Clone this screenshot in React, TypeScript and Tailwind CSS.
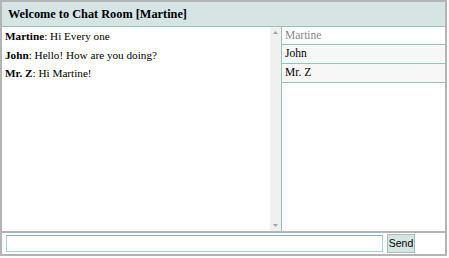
import React from "react";

export default function App() {
  const serif = { fontFamily: '"Liberation Serif", "Times New Roman", serif' };
  return (
    <div className="w-[449px] h-[258px] bg-white" style={serif}>
      <div className="w-[447px] h-[256px] border-2 border-[#b4b4b4] flex flex-col">
        <div className="h-[25px] shrink-0 bg-[#d5e5e4] border-b border-[#93c5b3] flex items-center pl-[6px]">
          <span className="text-[12.3px] font-bold text-black">Welcome to Chat Room [Martine]</span>
        </div>
        <div className="flex-1 flex min-h-0">
          <div className="flex-1 pl-[3px] pt-0 text-[11.2px] text-black leading-[18.5px]">
            <div><b>Martine</b>: Hi Every one</div>
            <div><b>John</b>: Hello! How are you doing?</div>
            <div><b>Mr. Z</b>: Hi Martine!</div>
          </div>
          <div className="w-[11px] shrink-0 bg-[#f0f0f0] flex flex-col justify-between items-center py-[4px]">
            <svg width="5" height="3" viewBox="0 0 5 3"><path d="M2.5 0 L5 3 L0 3 Z" fill="#a3a3a3" /></svg>
            <svg width="5" height="3" viewBox="0 0 5 3"><path d="M0 0 L5 0 L2.5 3 Z" fill="#a3a3a3" /></svg>
          </div>
          <div className="w-[164px] shrink-0 border-l border-[#93c5b3] flex flex-col text-[11.5px]">
            <div className="h-[18px] pl-[3px] flex items-center text-[#8a8a8a] border-b border-[#93c5b3]">Martine</div>
            <div className="h-[19px] pl-[3px] flex items-center text-black bg-[#f7f7f7] border-b border-[#93c5b3]">John</div>
            <div className="h-[19px] pl-[3px] flex items-center text-black bg-[#f7f7f7] border-b border-[#93c5b3]">Mr. Z</div>
          </div>
        </div>
        <div className="h-[23px] shrink-0 border-t-2 border-[#b4b4b4] flex items-center pl-[4px] gap-[4px]">
          <input className="w-[377px] h-[17px] border border-[#a8cde0] border-t-[#7eaecb] outline-none" />
          <button className="h-[19px] w-[28px] p-0 bg-[#d5e5e4] border border-[#a9bfb9] text-[10.5px] text-black" style={{ fontFamily: '"Liberation Sans", Arial, sans-serif' }}>Send</button>
        </div>
      </div>
    </div>
  );
}
